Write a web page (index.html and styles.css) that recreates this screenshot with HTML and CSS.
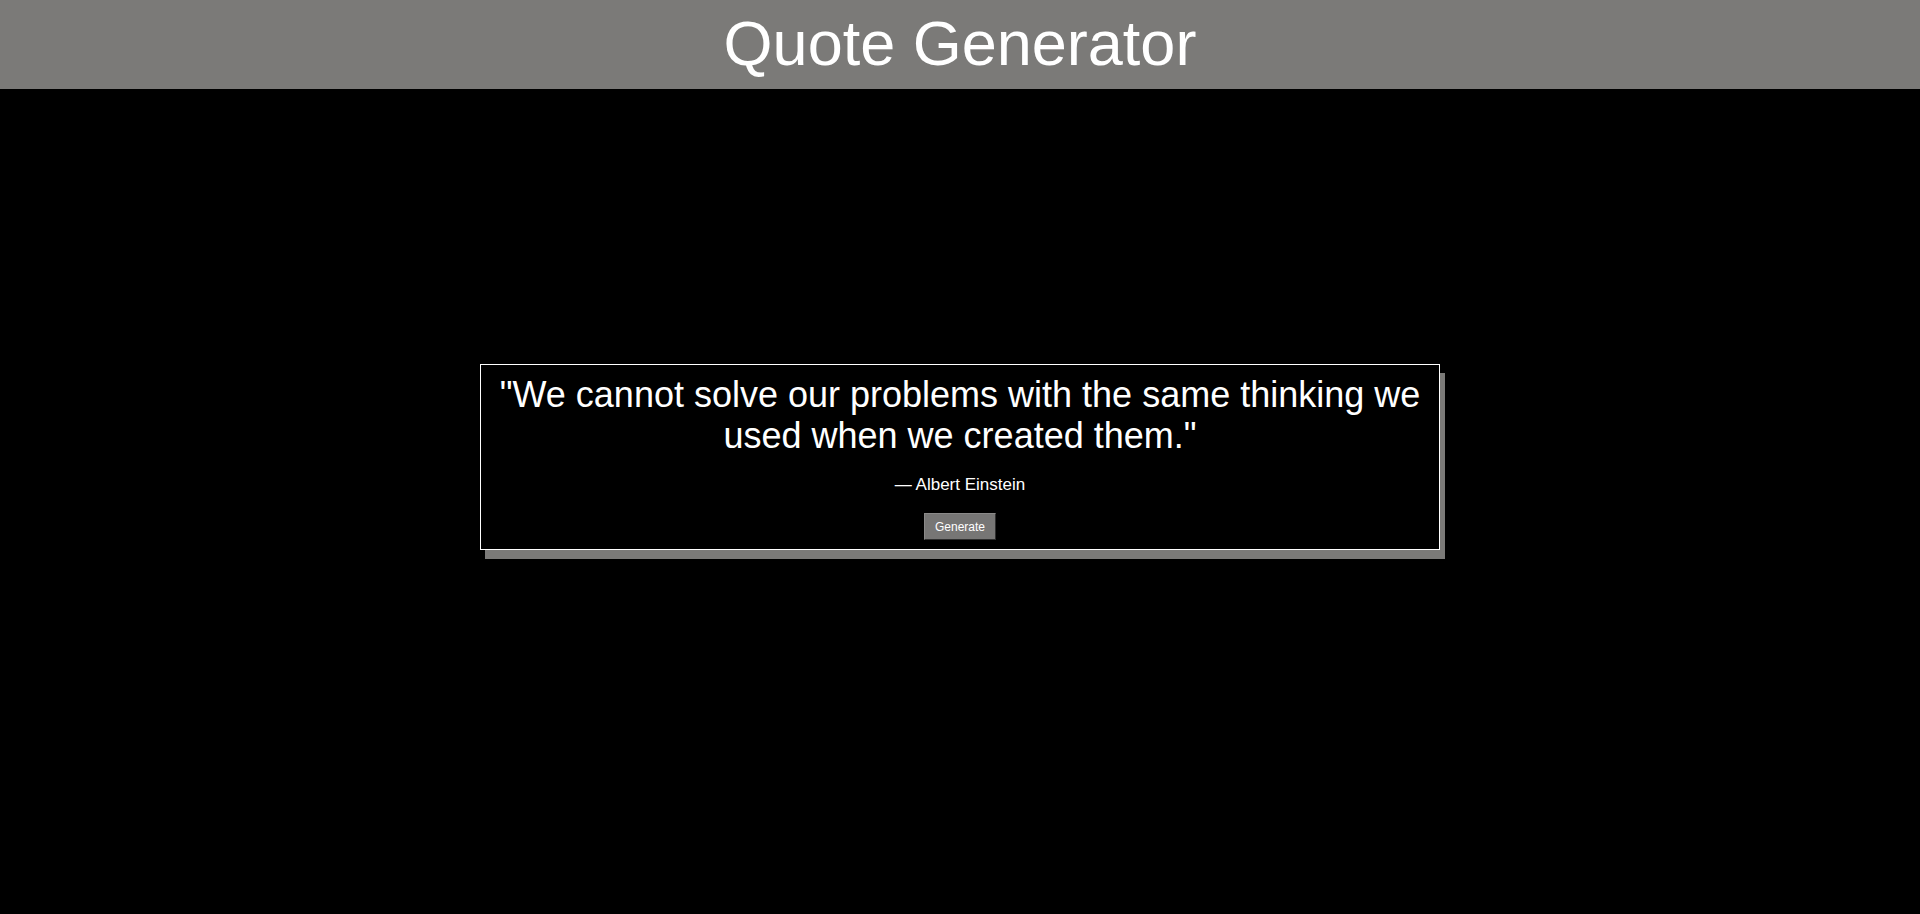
FILE: index.html
```html
<!DOCTYPE html>
<html lang="en">
<head>
<meta charset="utf-8">
<title>Quote Generator</title>
<link rel="stylesheet" href="styles.css">
</head>
<body>
<div class="page">
  <header class="topbar">
    <h1 class="title">Quote Generator</h1>
  </header>
  <main class="stage">
    <section class="quote-card">
      <p class="quote-text">"We cannot solve our problems with the same thinking we used when we created them."</p>
      <p class="quote-author">— Albert Einstein</p>
      <button class="generate-btn" type="button">Generate</button>
    </section>
  </main>
</div>
</body>
</html>
```

FILE: styles.css
```css
html, body {
  margin: 0;
  padding: 0;
  background: #000;
  color: #fff;
  font-family: "Liberation Sans", Arial, Helvetica, sans-serif;
}

.page {
  display: grid;
  grid-template-columns: 1fr;
  grid-template-rows: 100vh;
}

.topbar {
  grid-row: 1;
  grid-column: 1;
  align-self: start;
  height: 89px;
  background: #7b7a78;
  display: flex;
  justify-content: center;
  align-items: center;
  z-index: 1;
}

.title {
  margin: 0;
  font-size: 63px;
  font-weight: normal;
  line-height: 1;
  color: #fff;
  padding-bottom: 3px;
}

.stage {
  grid-row: 1;
  grid-column: 1;
  display: flex;
  justify-content: center;
  align-items: center;
}

.quote-card {
  width: 958px;
  box-sizing: content-box;
  border: 1px solid #fff;
  background: #000;
  box-shadow: 5px 9px 0 #7b7a78;
  padding: 9px 0 9px;
  text-align: center;
}

.quote-text {
  margin: 0 16px;
  font-size: 36px;
  line-height: 41px;
}

.quote-author {
  margin: 18px 0;
  font-size: 17px;
  line-height: 21px;
}

.generate-btn {
  font-family: "Liberation Sans", Arial, Helvetica, sans-serif;
  font-size: 12px;
  line-height: 14px;
  color: #fff;
  background: #777675;
  border: 1px solid;
  border-color: #8a8988 #2e2e2e #2e2e2e #8a8988;
  padding: 5px 10px;
  margin: 0;
  width: 72px;
  height: 27px;
  cursor: pointer;
  vertical-align: top;
}
```
